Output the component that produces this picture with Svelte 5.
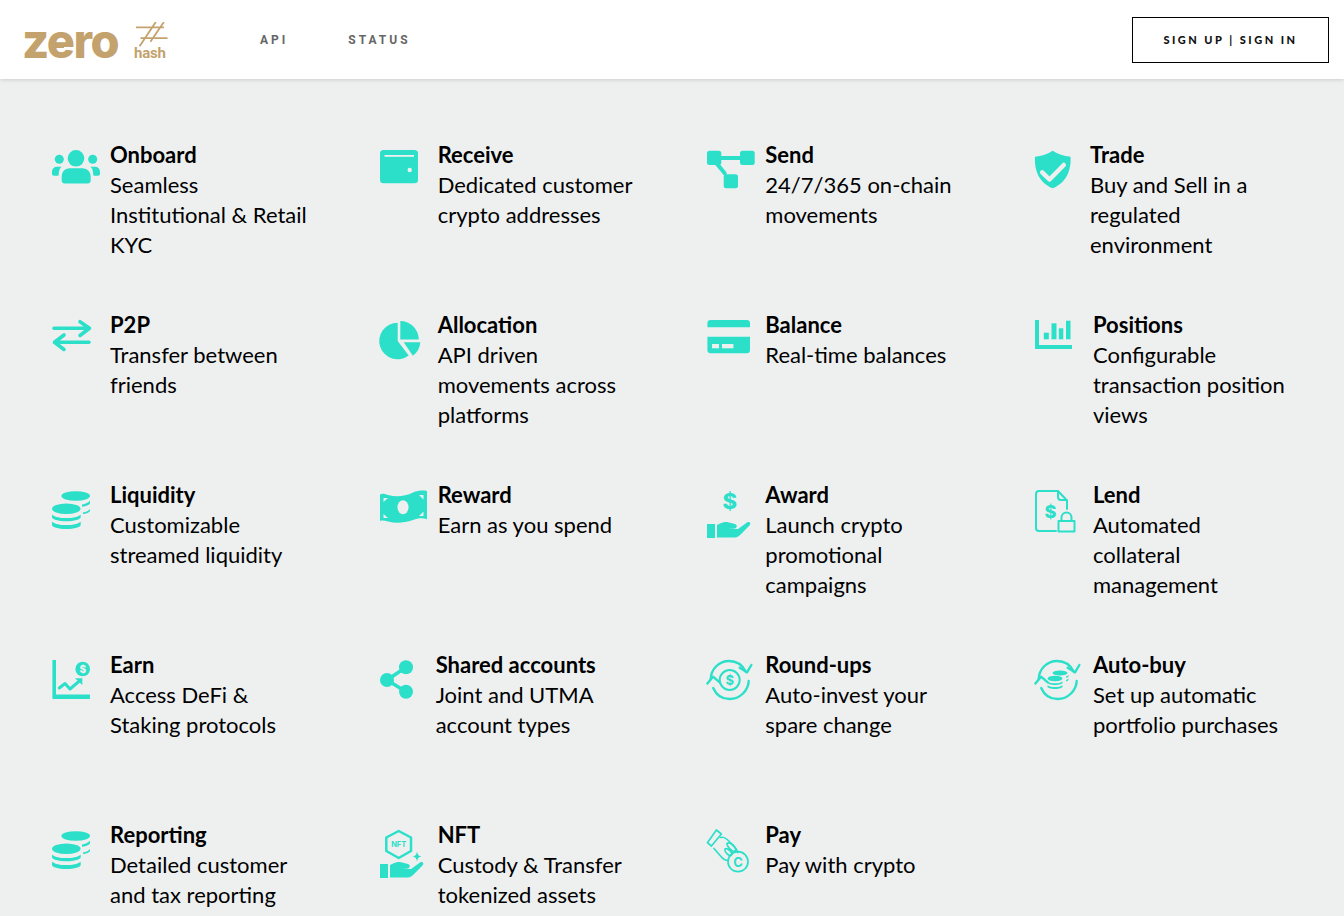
<script>
  const bg = '#eef0f0';

  const items = [
    { icon: 'onboard', title: 'Onboard', lines: ['Seamless', 'Institutional & Retail', 'KYC'] },
    { icon: 'wallet', title: 'Receive', lines: ['Dedicated customer', 'crypto addresses'] },
    { icon: 'send', title: 'Send', lines: ['24/7/365 on-chain', 'movements'] },
    { icon: 'shield', title: 'Trade', lines: ['Buy and Sell in a', 'regulated', 'environment'], width: 45 },
    { icon: 'p2p', title: 'P2P', lines: ['Transfer between', 'friends'] },
    { icon: 'pie', title: 'Allocation', lines: ['API driven', 'movements across', 'platforms'] },
    { icon: 'card', title: 'Balance', lines: ['Real-time balances'] },
    { icon: 'bars', title: 'Positions', lines: ['Configurable', 'transaction position', 'views'] },
    { icon: 'coins', title: 'Liquidity', lines: ['Customizable', 'streamed liquidity'] },
    { icon: 'bill', title: 'Reward', lines: ['Earn as you spend'] },
    { icon: 'award', title: 'Award', lines: ['Launch crypto', 'promotional', 'campaigns'] },
    { icon: 'lend', title: 'Lend', lines: ['Automated', 'collateral', 'management'] },
    { icon: 'earn', title: 'Earn', lines: ['Access DeFi &', 'Staking protocols'] },
    { icon: 'share', title: 'Shared accounts', lines: ['Joint and UTMA', 'account types'], width: 46 },
    { icon: 'roundups', title: 'Round-ups', lines: ['Auto-invest your', 'spare change'] },
    { icon: 'autobuy', title: 'Auto-buy', lines: ['Set up automatic', 'portfolio purchases'] },
    { icon: 'coins', title: 'Reporting', lines: ['Detailed customer', 'and tax reporting'] },
    { icon: 'nft', title: 'NFT', lines: ['Custody & Transfer', 'tokenized assets'] },
    { icon: 'pay', title: 'Pay', lines: ['Pay with crypto'] },
  ];
</script>

{#snippet hand()}
  <path d="M0 44h8v14H0zM10 45c3-2 7-3.500 10-3l8 2c3 1 2 4.500-1 4.500h-6l10 .5 9-6.500c2.500-1.500 4.500 1 2.500 3L33 55c-1.500 1.500-3 2.500-5 2.500H10z" />
{/snippet}

{#snippet cycle()}
  <g class="line" stroke-width="2.4">
    <path d="M3.700 29C4 19 12 11 22 11c7.500 0 13.500 4 17 11" />
    <path d="M44.400 15 40 22.300l-7.300-4.600" />
    <path d="M41.700 31c-.500 10-9 18-19 18-7.500 0-13.500-4-16.500-11" />
    <path d="M.4 33.500 6 26.700l6.700 5.600" />
  </g>
{/snippet}

<div class="page">
  <header>
    <div class="logo">
      <span class="zero">zero</span>
      <span class="dash"></span>
      <span class="hash-word">hash</span>
      <svg class="hash-mark" viewBox="0 0 40 30" aria-hidden="true">
        <path d="M5 6h31M10 18h30M27 0 9 27M36 0 21 22" />
      </svg>
    </div>
    <nav>
      <a href="#api">API</a>
      <a href="#status">STATUS</a>
    </nav>
    <button>SIGN UP | SIGN IN</button>
  </header>

  <main>
    {#each items as item}
      <section>
        <div class="icon" style:width="{item.width ?? 48}px">
          <svg width="48" height="60" viewBox="0 0 48 60" aria-hidden="true">
            {#if item.icon === 'onboard'}
              <circle cx="24" cy="18.300" r="8.300" />
              <circle cx="7.300" cy="19.300" r="4.500" />
              <circle cx="40.700" cy="19.300" r="4.500" />
              <path d="M9.700 37c0-6 4-8.700 8-8.700h12.600c4 0 8.400 2.700 8.400 8.700v3.500c0 1.800-1.200 3-3 3H12.700c-1.800 0-3-1.200-3-3z" />
              <path d="M0 32c0-3.500 2.500-5.300 5-5.300h4.700c-2.300 1.700-2.500 3.500-3.200 9H2c-1.200 0-2-.8-2-2zM48 32c0-3.500-2.500-5.300-5-5.300h-4.700c2.300 1.700 2.500 3.500 3.200 9H46c1.200 0 2-.8 2-2z" />
            {:else if item.icon === 'wallet'}
              <rect x="0" y="10" width="38" height="33.300" rx="3.500" />
              <path d="M4.500 15h29.500v1.800H4.500z" fill={bg} />
              <circle cx="29.700" cy="30" r="2.200" fill={bg} />
            {:else if item.icon === 'send'}
              <rect x="0" y="10.700" width="14.300" height="14.300" rx="2.500" />
              <rect x="33" y="10.700" width="14.700" height="14.300" rx="2.500" />
              <rect x="16.700" y="34.300" width="14.300" height="14" rx="2.500" />
              <path class="line" stroke-width="4" stroke-linecap="butt" d="M12 18h22M9.500 23.300l8.200 10" />
            {:else if item.icon === 'shield'}
              <path d="M17.700 10.700c5 3.300 11 5.500 17.800 6 .8 13-3.500 25.500-17.800 31.600C3.500 42.200-.8 29.700 0 16.700c6.800-.5 12.800-2.700 17.700-6z" />
              <path d="M7.200 32.300 14.500 39.500 28.800 25" fill="none" stroke={bg} stroke-width="4.500" stroke-linecap="round" stroke-linejoin="round" />
            {:else if item.icon === 'p2p'}
              <g class="line" stroke-width="3.600">
                <path d="M2 18.300h35M28 11.700l9.500 6.600L28 25.500" />
                <path d="M37 32.300H2.500M12 25 2.500 32.300 12 39.500" />
              </g>
            {:else if item.icon === 'pie'}
              <path d="M17.700 12.700A18.300 18.300 0 1 0 28.700 45.500L17.700 31z" />
              <path d="M20.300 11A18.500 18.500 0 0 1 38.800 29.500H20.300z" />
              <path d="M23.700 32.300H40.300A18 18 0 0 1 32.900 45.700z" />
            {:else if item.icon === 'card'}
              <path d="M.4 13c0-1.700 1.300-3 3-3H40c1.700 0 3 1.300 3 3v4.300H.4z" />
              <path d="M.4 26.700H43V40.300c0 1.700-1.300 3-3 3H3.400c-1.700 0-3-1.300-3-3z" />
              <rect x="5" y="34" width="7" height="4.300" fill={bg} />
              <rect x="15" y="34" width="11.400" height="4.300" fill={bg} />
            {:else if item.icon === 'bars'}
              <path d="M0 10h4v25h33v4H1c-.6 0-1-.4-1-1z" />
              <rect x="8.800" y="22.700" width="5" height="6.600" />
              <rect x="16.500" y="13.300" width="5" height="16" />
              <rect x="23.800" y="18.300" width="4.500" height="11" />
              <rect x="31" y="10.700" width="4.500" height="18.600" />
            {:else if item.icon === 'coins'}
              <ellipse cx="23.700" cy="16" rx="14.300" ry="4.800" />
              <path d="M30 24.500c3.500-.6 6.500-2 8-4v2.700c0 1.300-3.500 3-8 3.500z" />
              <path d="M31 32.500c3-.6 5.700-1.700 7-3.500v1.700c0 1.200-3 2.800-7 3.400z" />
              <ellipse cx="14.300" cy="28.700" rx="14.300" ry="5.300" />
              <path d="M0 34.700c3 2.500 8.500 3.300 14.300 3.300s11.300-.8 14.400-3.300v2.500c0 2.300-6.500 4-14.400 4S0 39.500 0 37.200z" />
              <path d="M0 41.700c3 2.500 8.500 3.300 14.300 3.300s11.300-.8 14.400-3.300v3c0 2.500-6.500 4.300-14.400 4.300S0 47.200 0 44.700z" />
            {:else if item.icon === 'bill'}
              <path d="M0 14.500c2-1 4-.8 8 .5 9 2.500 17 1.300 25-2.500 5-2 10-2.500 14-1.500v28.200c-5-1.500-9-1-14 .8-9 3-17 3.700-25 1.500-3.500-1-6-1.300-8-.5z" />
              <ellipse cx="23" cy="27.300" rx="5.500" ry="7" fill={bg} />
              <g fill={bg}>
                <path d="M3.500 18h4.500l-4.500 4zM3.500 34l4.500 4H3.500zM43.500 15v4.500L39 15zM43.500 31.500v4.500h-4.500z" />
              </g>
            {:else if item.icon === 'award'}
              <text x="22.700" y="28.500" class="glyph" font-size="22">$</text>
              {@render hand()}
            {:else if item.icon === 'lend'}
              <g class="line" stroke-width="2">
                <path d="M23 11H4a3 3 0 0 0-3 3v34a3 3 0 0 0 3 3h17M23 11l9 9.500V29M23 12v5a3 3 0 0 0 3 3h6" />
                <rect x="23.500" y="41" width="16" height="10.500" stroke-linecap="butt" />
                <path d="M26.500 41v-3.500a5 5 0 0 1 10 0V41" />
              </g>
              <text x="15.500" y="37.500" class="glyph" font-size="18">$</text>
            {:else if item.icon === 'earn'}
              <path d="M.4 10h3.600v34.500h34V49H1.500c-.7 0-1.100-.4-1.100-1z" />
              <circle cx="30.700" cy="19" r="7.300" />
              <text x="30.700" y="22.600" class="glyph" font-size="10" fill={bg}>$</text>
              <path class="line" stroke-width="3" stroke-linecap="butt" stroke-linejoin="miter" d="M7.300 38 13 33.500l5 5.500 10-8.500" />
              <path d="M23 28.300h7.300V35z" />
            {:else if item.icon === 'share'}
              <circle cx="26" cy="17.300" r="7" />
              <circle cx="7" cy="30" r="7" />
              <circle cx="26" cy="41.700" r="7" />
              <path class="line" stroke-width="3.500" d="M26 17.300 7 30l19 11.700" />
            {:else if item.icon === 'roundups'}
              {@render cycle()}
              <circle class="line" cx="22.700" cy="30" r="10" stroke-width="2" />
              <text x="22.700" y="34.500" class="glyph light" font-size="13">$</text>
            {:else if item.icon === 'autobuy'}
              {@render cycle()}
              <ellipse cx="25" cy="23" rx="7.500" ry="2.600" />
              <path d="M31 26.500c1.200-.3 2-1 2.500-1.700v1.500c0 .6-1 1.300-2.500 1.600zM31 30c1.200-.3 2-1 2.500-1.700v1.500c0 .6-1 1.300-2.500 1.600z" />
              <ellipse cx="20" cy="28.500" rx="7.500" ry="2.800" />
              <path d="M12.500 31.500c1.500 1.300 4.500 1.800 7.500 1.800s6-.5 7.500-1.800v1.300c0 1.200-3.400 2.200-7.500 2.200s-7.500-1-7.500-2.200z" />
              <path d="M12.500 35.200c1.500 1.300 4.500 1.800 7.500 1.800s6-.5 7.500-1.800v1.600c0 1.200-3.400 2.200-7.500 2.200s-7.500-1-7.500-2.200z" />
            {:else if item.icon === 'nft'}
              <path class="line" stroke-width="2.500" stroke-linejoin="miter" d="M18.700 11 31 17.500v13.500l-12.300 7L6.300 31V17.500z" />
              <text x="18.700" y="27" class="glyph light" font-size="7.500">NFT</text>
              <path d="M37 31.500c.5 3 1.500 4.500 4.500 5-3 .5-4 2-4.500 5-.5-3-1.500-4.500-4.500-5 3-.5 4-2 4.500-5z" />
              {@render hand()}
            {:else if item.icon === 'pay'}
              <g class="line" stroke-width="1.700">
                <path d="M9.400 10l5 4-10 12-4-3.300z" />
                <path d="M13.500 17.500c3-1 7 1.500 10.500 6 2 2 5 4 7 9" />
                <path d="M7 28.500l7 8c2 2.500 5 4 7 4" />
                <path d="M20 23.500c2.500-1.500 6 .5 8 4 2 3-1 5-3 3-2.500-2-5-3.500-5-7zM18 29c2-1 5 1 6.500 3.500 1.500 2.500-1 4-3 2.500-2-1.500-4-3-3.500-6z" />
                <circle cx="31" cy="41.700" r="10" />
              </g>
              <text x="31" y="46.500" class="glyph light" font-size="13">C</text>
            {/if}
          </svg>
        </div>
        <div class="copy">
          <h3>{item.title}</h3>
          {#each item.lines as line}
            <p>{line}</p>
          {/each}
        </div>
      </section>
    {/each}
  </main>
</div>

<style>
  :global(body) {
    background: #eef0f0;
  }

  .page {
    height: 916px;
    overflow: hidden;
    font-family: 'Lato', 'Liberation Sans', sans-serif;
  }

  header {
    height: 79px;
    display: flex;
    align-items: center;
    padding: 0 15px 0 22px;
    background: #fff;
    box-shadow: 0 1px 4px rgba(0, 0, 0, 0.14);
    box-sizing: border-box;
  }

  .logo {
    position: relative;
    width: 146px;
    height: 50px;
    flex: none;
    color: #c3a26d;
  }

  .zero {
    position: absolute;
    left: 0;
    top: -4px;
    font-family: 'Inter', sans-serif;
    font-size: 47px;
    font-weight: 800;
    line-height: 60px;
    letter-spacing: -1.5px;
  }

  .dash {
    position: absolute;
    left: 30px;
    top: 28px;
    width: 12px;
    height: 5px;
    background: #c3a26d;
  }

  .hash-word {
    position: absolute;
    left: 112px;
    top: 29px;
    font-family: 'Roboto', sans-serif;
    font-size: 15px;
    font-weight: 700;
    line-height: 18px;
    letter-spacing: -0.2px;
  }

  .hash-mark {
    position: absolute;
    left: 109px;
    top: 7px;
    width: 37px;
    height: 27px;
  }

  .hash-mark path {
    fill: none;
    stroke: #c3a26d;
    stroke-width: 2;
  }

  nav {
    display: flex;
    gap: 60px;
    margin-left: 92px;
  }

  nav a {
    color: #666;
    font-family: 'Roboto', sans-serif;
    font-size: 12px;
    font-weight: 700;
    letter-spacing: 3px;
    text-decoration: none;
  }

  button {
    width: 197px;
    height: 46px;
    margin-left: auto;
    border: 1px solid #000;
    border-radius: 0;
    background: #fff;
    color: #111;
    font-family: 'Lato', sans-serif;
    font-size: 11px;
    font-weight: 900;
    letter-spacing: 2.5px;
    cursor: pointer;
  }

  main {
    display: grid;
    grid-template-columns: repeat(4, 327.67px);
    grid-auto-rows: 170px;
    padding: 61px 0 0 52px;
  }

  section {
    display: flex;
    gap: 10px;
  }

  .icon {
    flex: none;
  }

  .icon svg {
    display: block;
    fill: #2bdfc9;
    overflow: visible;
  }

  .line {
    fill: none;
    stroke: #2bdfc9;
    stroke-linecap: round;
    stroke-linejoin: round;
  }

  .glyph {
    font-family: 'Inter', sans-serif;
    font-weight: 800;
    text-anchor: middle;
  }

  .glyph.light {
    font-weight: 700;
  }

  h3,
  p {
    margin: 0;
    color: #000;
    font-size: 22px;
    line-height: 30px;
    white-space: nowrap;
  }

  h3 {
    font-weight: 700;
  }

  p {
    font-weight: 400;
  }
</style>
